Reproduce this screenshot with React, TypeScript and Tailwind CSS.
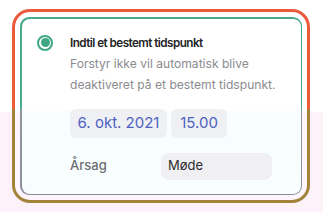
export default function App() {
  return (
    <div
      className="w-[323px] h-[212px] overflow-hidden pt-[9px] pl-[12px] bg-[linear-gradient(to_bottom,#ffffff_112px,#fdf1fa_112px)]"
      style={{ fontFamily: "Inter, 'Noto Sans', sans-serif" }}
    >
      {/* outer highlight frame */}
      <div className="w-[298px] h-[194px] rounded-[18px] p-[3px] bg-[linear-gradient(to_bottom,#ec5a3d_100px,#a1843a_100px)]">
        <div className="h-full rounded-[15px] p-[5px] bg-[linear-gradient(to_bottom,#ffffff_100px,#fef6fc_100px)]">
          {/* option card */}
          <div className="h-full rounded-[9px] p-[1.5px] bg-[linear-gradient(to_bottom,#4ba78e_92px,#8d999c_92px,#8a8fa0)]">
            <div className="h-full rounded-[8px] pt-[14.5px] pl-[15.5px] flex gap-[17px] bg-[linear-gradient(to_bottom,#ffffff_92px,#f8fefe_92px)]">
              <div className="mt-[1.5px] w-4 h-4 shrink-0 rounded-full border-2 border-[#3fa784] flex items-center justify-center">
                <div className="w-[9px] h-[9px] rounded-full bg-[#3fa784]" />
              </div>
              <div className="flex flex-col">
                <div className="text-[11.7px] leading-[20px] font-semibold text-[#222326] tracking-[-0.55px] whitespace-nowrap">
                  Indtil et bestemt tidspunkt
                </div>
                <div className="text-[12.1px] leading-[21px] text-[#8b8b90] whitespace-nowrap">
                  Forstyr ikke vil automatisk blive
                  <br />
                  deaktiveret på et bestemt tidspunkt.
                </div>
                <div className="mt-[13.5px] flex gap-1">
                  <div className="h-[29px] w-[97px] rounded-[6px] bg-[#eef0f4] flex items-center justify-center text-[15px] text-[#4f62c2]">
                    6. okt. 2021
                  </div>
                  <div className="h-[29px] w-[56px] rounded-[6px] bg-[#eef0f4] flex items-center justify-center text-[15px] text-[#4f62c2]">
                    15.00
                  </div>
                </div>
                <div className="mt-[15px] flex items-center">
                  <div className="w-[91px] text-[13px] font-medium text-[#6e6e73]">Årsag</div>
                  <div className="h-[27px] w-[111px] rounded-[8px] bg-[#f0f0f2] flex items-center pl-[7px] text-[13px] text-[#2a2a2e]">
                    Møde
                  </div>
                </div>
              </div>
            </div>
          </div>
        </div>
      </div>
    </div>
  );
}
